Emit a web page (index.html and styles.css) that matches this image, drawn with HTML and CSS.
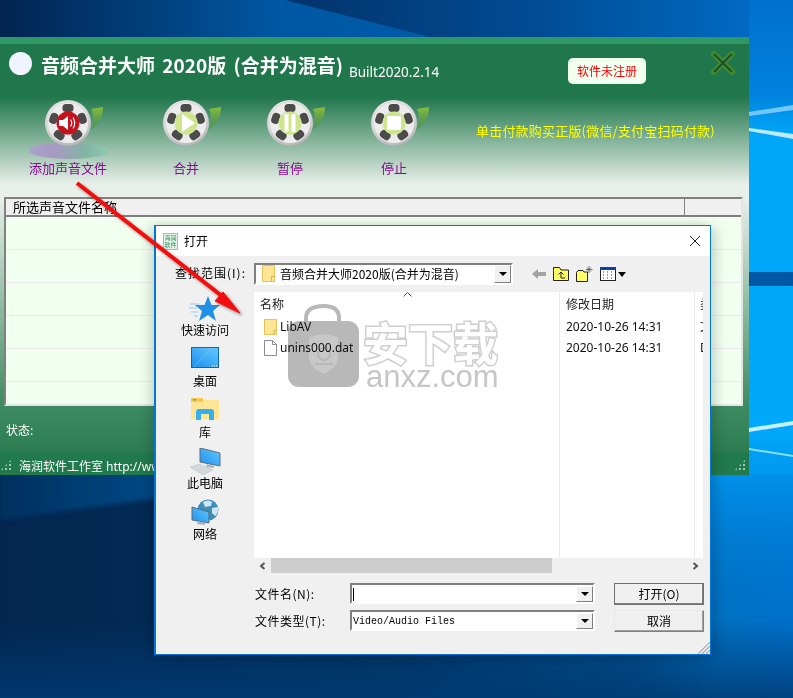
FILE: index.html
```html
<!DOCTYPE html>
<html lang="zh-CN">
<head>
<meta charset="utf-8">
<title>音频合并大师 2020版</title>
<link rel="stylesheet" href="styles.css">
</head>
<body>
<svg width="0" height="0" class="defs">
  <defs>
    <radialGradient id="reelFace" cx="45%" cy="35%" r="70%">
      <stop offset="0" stop-color="#f4f4f4"/><stop offset=".7" stop-color="#d6d6d6"/><stop offset="1" stop-color="#a9a9a9"/>
    </radialGradient>
    <linearGradient id="leaf" x1="0" y1="0" x2="0" y2="1">
      <stop offset="0" stop-color="#8dbf3c"/><stop offset="1" stop-color="#3f8a46" stop-opacity=".5"/>
    </linearGradient>
    <linearGradient id="screen" x1="0" y1="1" x2="1" y2="0">
      <stop offset="0" stop-color="#1a90ee"/><stop offset="1" stop-color="#66c8ff"/>
    </linearGradient>
    <symbol id="reel" viewBox="0 0 60 46">
      <path d="M45 30C49 25 49 14 46 9L58 7C58 17 53 26 45 30Z" fill="url(#leaf)"/>
      <circle cx="23" cy="23" r="23" fill="url(#reelFace)"/>
      <circle cx="23" cy="23" r="20" fill="#ececec"/>
      <g fill="#4b4b4b">
        <rect x="17.500" y="4" width="11" height="8" rx="3.500"/>
        <rect x="17.500" y="4" width="11" height="8" rx="3.500" transform="rotate(72 23 23)"/>
        <rect x="17.500" y="4" width="11" height="8" rx="3.500" transform="rotate(144 23 23)"/>
        <rect x="17.500" y="4" width="11" height="8" rx="3.500" transform="rotate(216 23 23)"/>
        <rect x="17.500" y="4" width="11" height="8" rx="3.500" transform="rotate(288 23 23)"/>
      </g>
    </symbol>
  </defs>
</svg>

<svg class="wallpaper" viewBox="0 0 793 698" width="793" height="698">
  <defs>
    <linearGradient id="wpTop" x1="0" y1="0" x2="1" y2="0">
      <stop offset="0" stop-color="#022450"/><stop offset=".36" stop-color="#0058a4"/><stop offset="1" stop-color="#0060b0"/>
    </linearGradient>
    <linearGradient id="wpTopRight" gradientUnits="userSpaceOnUse" x1="285" y1="0" x2="793" y2="0">
      <stop offset="0" stop-color="#03336c"/><stop offset=".5" stop-color="#004c94"/><stop offset="1" stop-color="#0070cc"/>
    </linearGradient>
    <linearGradient id="wpBase" x1="0" y1="0" x2="1" y2="0">
      <stop offset="0" stop-color="#02264f"/><stop offset=".5" stop-color="#02325f"/><stop offset=".8" stop-color="#00508f"/><stop offset=".9" stop-color="#0070c0"/><stop offset="1" stop-color="#0070cc"/>
    </linearGradient>
    <linearGradient id="wpFade" x1="0" y1="0" x2="0" y2="1">
      <stop offset="0" stop-color="#003a72" stop-opacity="0"/><stop offset="1" stop-color="#003a72" stop-opacity=".85"/>
    </linearGradient>
    <linearGradient id="wpRight" x1="0" y1="0" x2="0" y2="1">
      <stop offset="0" stop-color="#0070cc"/><stop offset=".2" stop-color="#0082de"/><stop offset=".28" stop-color="#00a6f8"/><stop offset=".9" stop-color="#00a8fb"/><stop offset="1" stop-color="#0098ee"/>
    </linearGradient>
    <linearGradient id="wpLower" x1="0" y1="0" x2="0" y2="1">
      <stop offset="0" stop-color="#0090ea"/><stop offset="1" stop-color="#0070c4" stop-opacity="0"/>
    </linearGradient>
    <linearGradient id="wpLeft" x1="0" y1="0" x2="1" y2="0">
      <stop offset="0" stop-color="#01305f"/><stop offset="1" stop-color="#024a88"/>
    </linearGradient>
    <filter id="wpSoft"><feGaussianBlur stdDeviation="2"/></filter>
  </defs>
  <rect width="793" height="698" fill="url(#wpBase)"/>
  <rect x="711" y="475" width="82" height="165" fill="url(#wpLower)"/>
  <rect y="620" width="793" height="78" fill="url(#wpFade)"/>
  <rect width="793" height="40" fill="url(#wpTop)"/>
  <polygon points="285,0 793,0 793,55 500,55" fill="url(#wpTopRight)"/>
  <polygon points="0,520 165,497 165,465 0,465" fill="url(#wpLeft)" filter="url(#wpSoft)"/>
  <rect x="749" y="0" width="44" height="475" fill="url(#wpRight)"/>
  <rect x="749" y="272" width="44" height="14" fill="#0058a5"/>
  <polygon points="749,428 793,421 793,425 749,432" fill="#c4f0ff"/>
  <polygon points="749,448 793,455 793,457 749,450" fill="#86e0ff"/>
  <polygon points="749,128 793,134 793,139 749,131" fill="#bfeaff"/>
  <polygon points="749,112 793,105 793,110 749,116" fill="#70c8ff"/>
</svg>

<main class="app">
  <div class="app-band"></div>
  <header class="app-title">
    <span class="app-dot"></span>
    <h1 class="app-name">音频合并大师 2020版 (合并为混音)</h1>
    <span class="app-build">Built2020.2.14</span>
    <span class="register">软件未注册</span>
    <svg class="app-close" width="26" height="26" viewBox="0 0 26 26">
      <path d="M4 4L22 22M22 4L4 22" stroke="#428c2c" stroke-width="6" stroke-linecap="round"/>
      <path d="M4 4L22 22M22 4L4 22" stroke="#1f4f2c" stroke-width="2"/>
    </svg>
  </header>
  <nav class="toolbar">
    <div class="tool tool-first">
      <div class="tool-icon">
        <span class="disc"></span>
        <svg class="reel" width="60" height="46"><use href="#reel"/></svg>
        <svg class="badge" width="24" height="24" viewBox="0 0 24 24">
          <circle cx="12" cy="12" r="11.500" fill="#c4121c"/>
          <path d="M3 9H7L12 5V19L7 15H3Z" fill="#fff"/>
          <path d="M14.500 8.500Q17 12 14.500 15.500M17 6.500Q20.500 12 17 17.500" fill="none" stroke="#fff" stroke-width="1.200"/>
        </svg>
      </div>
      <span class="tool-label">添加声音文件</span>
    </div>
    <div class="tool tool-second">
      <div class="tool-icon">
        <svg class="reel" width="60" height="46"><use href="#reel"/></svg>
        <svg class="badge" width="24" height="24" viewBox="0 0 24 24">
          <circle cx="12" cy="12" r="11.500" fill="#cfe58d"/>
          <path d="M8 3L21 12L8 21Z" fill="#fff"/>
        </svg>
      </div>
      <span class="tool-label">合并</span>
    </div>
    <div class="tool">
      <div class="tool-icon">
        <svg class="reel" width="60" height="46"><use href="#reel"/></svg>
        <svg class="badge" width="24" height="24" viewBox="0 0 24 24">
          <circle cx="12" cy="12" r="11.500" fill="#cfe58d"/>
          <path d="M6.500 3H10.500V21H6.500ZM13.500 3H17.500V21H13.500Z" fill="#fff"/>
        </svg>
      </div>
      <span class="tool-label">暂停</span>
    </div>
    <div class="tool">
      <div class="tool-icon">
        <svg class="reel" width="60" height="46"><use href="#reel"/></svg>
        <svg class="badge" width="24" height="24" viewBox="0 0 24 24">
          <circle cx="12" cy="12" r="11.500" fill="#cfe58d"/>
          <rect x="5" y="5" width="14" height="14" rx="1" fill="#fff"/>
        </svg>
      </div>
      <span class="tool-label">停止</span>
    </div>
    <span class="buy">单击付款购买正版(微信/支付宝扫码付款)</span>
  </nav>
  <section class="table">
    <div class="table-head">
      <span class="th th-name">所选声音文件名称</span>
      <span class="th th-rest"></span>
    </div>
    <div class="table-body">
      <div class="row"></div><div class="row"></div><div class="row"></div>
      <div class="row"></div><div class="row"></div><div class="row row-last"></div>
    </div>
  </section>
  <div class="status">状态:</div>
  <footer class="statusbar">
    <span class="grip grip-left"></span>
    <span class="statusbar-text">海润软件工作室 http://www</span>
    <span class="grip grip-right"></span>
  </footer>
</main>

<section class="dialog">
  <div class="dlg-title">
    <span class="dlg-logo">海润软件</span>
    <span class="dlg-caption">打开</span>
    <svg class="dlg-close" width="12" height="12" viewBox="0 0 12 12"><path d="M1 1L11 11M11 1L1 11" stroke="#222" stroke-width="1"/></svg>
  </div>
  <div class="dlg-lookin">
    <span class="dlg-lookin-label">查找范围(I):</span>
    <div class="combo combo-path">
      <svg class="folder-sm" width="13" height="17" viewBox="0 0 13 17"><path d="M.5.5H12.500V16.500H.5Z" fill="#ffe594" stroke="#e3c25c"/><path d="M9.500 16.500V11.500H12.500" fill="none" stroke="#d9b64f"/></svg>
      <span class="combo-text">音频合并大师2020版(合并为混音)</span>
      <span class="combo-btn"><i class="caret"></i></span>
    </div>
    <div class="lookin-tools">
      <svg width="14" height="10" viewBox="0 0 14 10"><path d="M0 5L6 0V3H14V7H6V10Z" fill="#a3a3a3"/></svg>
      <svg width="16" height="14" viewBox="0 0 16 14"><path d="M.5 3.500V.5H6.500L8 3H15.500V13.500H.5Z" fill="#ffff66" stroke="#222"/><path d="M8 11V6M5.500 7.500L8 5L10.500 7.500M8 11H12" fill="none" stroke="#222"/></svg>
      <svg width="17" height="16" viewBox="0 0 17 16"><path d="M.5 6.500L2 4.500H7L8 6H11.500V15.500H.5Z" fill="#ffff66" stroke="#222"/><path d="M13 0V7M10 3.500H16.500M11 1.500L15 5.500M15 1.500L11 5.500" stroke="#555" stroke-width=".8"/></svg>
      <svg width="16" height="14" viewBox="0 0 16 14"><rect x=".5" y=".5" width="15" height="13" fill="#fff" stroke="#222"/><rect x="0" y="0" width="16" height="3" fill="#0a3ea8"/><path d="M3 5H5M7 5H9M11 5H13M3 8H5M7 8H9M11 8H13M3 11H5M7 11H9M11 11H13" stroke="#1a2bb0" stroke-dasharray="1 1"/></svg>
      <i class="caret caret-big"></i>
    </div>
  </div>
  <div class="dlg-main">
    <aside class="places">
      <div class="place">
        <svg width="32" height="27" viewBox="0 0 32 27"><path d="M19 1L22.500 10H31L24 16L27 26L19 20L10 26L13 16L6 10H15.500Z" fill="#1f8fe8"/><path d="M1 9H10M0 13H8M2 17H9M5 21H9" stroke="#8fc8f2" stroke-width="1"/></svg>
        <span class="place-label">快速访问</span>
      </div>
      <div class="place">
        <svg width="28" height="27" viewBox="0 0 28 27"><rect x=".5" y="1.500" width="27" height="20" fill="url(#screen)" stroke="#0a68b4"/><path d="M3 21L20 2" stroke="#7fd2ff" stroke-width="1" opacity=".6"/><path d="M21 20H26" stroke="#fff" stroke-dasharray="1 1"/></svg>
        <span class="place-label">桌面</span>
      </div>
      <div class="place">
        <svg width="28" height="27" viewBox="0 0 28 27"><path d="M0 3Q0 1 2 1H11L13 3H27Q28 3 28 4V22H0Z" fill="#ffe694"/><path d="M0 1H12V5H0Z" fill="#fcc84c"/><rect x="2" y="2" width="3" height="1.500" fill="#3aa8e6"/><path d="M5 23V15Q5 12 8 12H20Q23 12 23 15V23H18V17H10V23Z" fill="#35b0ec"/></svg>
        <span class="place-label">库</span>
      </div>
      <div class="place">
        <svg width="32" height="27" viewBox="0 0 32 27"><path d="M11 0L31 5V18L11 14Z" fill="url(#screen)" stroke="#5d6e7c"/><path d="M18 16L25 18V20L17 19Z" fill="#a9b4bc"/><path d="M1 19L10 16L24 22L14 27Z" fill="#d3d8db" stroke="#b9bfc3" stroke-width=".5"/></svg>
        <span class="place-label">此电脑</span>
      </div>
      <div class="place">
        <svg width="28" height="27" viewBox="0 0 28 27"><circle cx="17" cy="11" r="10.500" fill="#3f8fbe"/><path d="M12 3Q17 0 21 3L20 7L14 8ZM21 9L27 8Q28 14 24 17L21 14Z" fill="#cfe6ef"/><path d="M1 8L18 13V24L1 21Z" fill="url(#screen)" stroke="#5b6a76"/><path d="M7 22L14 24V26L6 25Z" fill="#a8b2ba"/></svg>
        <span class="place-label">网络</span>
      </div>
    </aside>
    <div class="files">
      <div class="files-head">
        <span class="col col-name">名称</span>
        <span class="col col-date">修改日期</span>
        <span class="col col-type">类</span>
        <svg class="sort-caret" width="9" height="5" viewBox="0 0 9 5"><path d="M.5 4.500L4.500 .5L8.500 4.500" fill="none" stroke="#555"/></svg>
      </div>
      <div class="file">
        <span class="col col-name"><svg width="13" height="16" viewBox="0 0 13 16"><path d="M.5.5H12.500V15.500H.5Z" fill="#ffe594" stroke="#e3c25c"/><path d="M10 15V11H12.500" fill="none" stroke="#d9b64f"/></svg>LibAV</span>
        <span class="col col-date">2020-10-26 14:31</span>
        <span class="col col-type">文</span>
      </div>
      <div class="file">
        <span class="col col-name"><svg width="13" height="16" viewBox="0 0 13 16"><path d="M.5.5H8.500L12.500 4.500V15.500H.5Z" fill="#fff" stroke="#8c8c8c"/><path d="M8.500.5V4.500H12.500" fill="none" stroke="#8c8c8c"/></svg>unins000.dat</span>
        <span class="col col-date">2020-10-26 14:31</span>
        <span class="col col-type">D</span>
      </div>
    </div>
  </div>
  <div class="hscroll">
    <svg class="hs-arrow" width="7" height="8" viewBox="0 0 7 8"><path d="M5.500 1L2 4L5.500 7" fill="none" stroke="#555" stroke-width="2"/></svg>
    <span class="hs-track"><span class="hs-thumb"></span></span>
    <svg class="hs-arrow" width="7" height="8" viewBox="0 0 7 8"><path d="M1.500 1L5 4L1.500 7" fill="none" stroke="#555" stroke-width="2"/></svg>
  </div>
  <div class="dlg-form">
    <div class="form-fields">
      <div class="form-row">
        <span class="form-label">文件名(N):</span>
        <div class="combo combo-field"><span class="input-text"><i class="cursor"></i></span><span class="combo-btn"><i class="caret"></i></span></div>
      </div>
      <div class="form-row">
        <span class="form-label">文件类型(T):</span>
        <div class="combo combo-field"><span class="input-text">Video/Audio Files</span><span class="combo-btn"><i class="caret"></i></span></div>
      </div>
    </div>
    <div class="form-btns">
      <span class="btn btn-default">打开(O)</span>
      <span class="btn">取消</span>
    </div>
  </div>
  <svg class="dlg-grip" width="12" height="12" viewBox="0 0 12 12"><path d="M0 12L12 0M4 12L12 4M8 12L12 8" stroke="#a8a8a8" stroke-width="1.200"/></svg>
</section>

<div class="watermark">
  <svg class="wm-bag" width="72" height="84" viewBox="0 0 72 84">
    <path d="M18 20V14Q18 2 36 2Q51 2 51 14V20" fill="none" stroke="#b8b8b8" stroke-width="4"/>
    <rect x="0" y="17" width="71" height="66" rx="11" fill="#b8b8b8"/>
    <path d="M21 33Q36 28 50 33V55Q48 65 36 70Q24 65 21 55Z" fill="#c8c8c8"/>
    <circle cx="36" cy="50" r="6" fill="none" stroke="#b8b8b8" stroke-width="2"/>
    <path d="M27 60H45" stroke="#b8b8b8" stroke-width="2"/>
  </svg>
  <div class="wm-text">
    <span class="wm-cn">安下载</span>
    <span class="wm-en">anxz.com</span>
  </div>
</div>

<svg class="pointer" width="793" height="698" viewBox="0 0 793 698">
  <defs><filter id="arrowShadow" x="-10%" y="-10%" width="120%" height="120%"><feDropShadow dx="2" dy="2" stdDeviation="1.500" flood-color="#000" flood-opacity=".45"/></filter></defs>
  <g filter="url(#arrowShadow)">
    <path d="M77 183L227 300" stroke="#f40c0c" stroke-width="4"/>
    <path d="M240 313L215 301L223 292Z" fill="#f40c0c" stroke="#f40c0c" stroke-width="1"/>
  </g>
</svg>
</body>
</html>
```

FILE: styles.css
```css
* { box-sizing: border-box; }
html, body { margin: 0; padding: 0; }
body {
  position: relative;
  width: 793px;
  height: 698px;
  overflow: hidden;
  background: #02264f;
  font-family: "Noto Sans CJK SC", "Noto Sans", sans-serif;
  font-size: 12px;
  color: #000;
}
.defs { position: absolute; }
.wallpaper { position: absolute; left: 0; top: 0; display: block; }

/* main app window */
.app {
  position: absolute;
  left: 0;
  top: 37px;
  width: 749px;
  height: 438px;
  display: flex;
  flex-direction: column;
  background: linear-gradient(#21774c 0, #21774c 60px, #e9f0ea 148px, #e9f0ea 160px, #3d8b61 368px, #2c7c52 416px);
}
.app-band { height: 7px; flex: none; background: #2f9966; }
.app-title {
  height: 38px;
  flex: none;
  display: flex;
  align-items: center;
  padding-left: 9px;
  color: #fff;
}
.app-dot { width: 23px; height: 23px; border-radius: 50%; background: #f0f4ff; flex: none; }
.app-name { margin: 4px 0 0 9px; font-size: 19px; line-height: 24px; font-weight: 700; white-space: nowrap; word-spacing: 3px; width: 308px; flex: none; }
.app-build { font-family: "Noto Sans", sans-serif; font-size: 13.500px; line-height: 18px; margin-top: 18px; width: 219px; flex: none; }
.register {
  width: 78px;
  height: 26px;
  line-height: 26px;
  text-align: center;
  border-radius: 5px;
  background: #f0fff0;
  color: #f00;
  font-size: 12px;
  flex: none;
  margin-top: 16px;
}
.app-close { margin: 0 0 0 64px; flex: none; }

.toolbar { height: 115px; flex: none; display: flex; padding-top: 18px; }
.tool { width: 104px; flex: none; display: flex; flex-direction: column; align-items: center; }
.tool-first { margin-left: 16px; }
.tool-second { margin-left: 14px; }
.tool-icon { position: relative; width: 46px; height: 46px; margin-bottom: 14px; }
.reel { position: absolute; left: 0; top: 0; display: block; }
.badge { position: absolute; left: 11px; top: 11px; display: block; }
.disc {
  position: absolute;
  left: -16px;
  top: 42px;
  width: 80px;
  height: 17px;
  border-radius: 50%;
  background: linear-gradient(90deg, #a9a0cc, #a79ac0 35%, #80b5a3 70%, #90c8b4);
}
.tool-label { font-size: 13px; line-height: 16px; color: #8a0a93; white-space: nowrap; }
.buy { margin: 23px 0 0 30px; font-size: 13px; line-height: 16px; color: #ff0; white-space: nowrap; letter-spacing: .2px; }

.table {
  height: 209px;
  flex: none;
  margin: 0 6px 0 4px;
  display: flex;
  flex-direction: column;
  border: 2px solid #808080;
  border-right-color: #e4e4e4;
  border-bottom-color: #e4e4e4;
}
.table-head { height: 18px; flex: none; display: flex; background: #f0f0f0; border-bottom: 2px solid #808080; }
.th { display: block; font-size: 13px; line-height: 16px; padding-left: 7px; white-space: nowrap; }
.th-name { width: 679px; border-right: 1px solid #808080; }
.th-rest { flex: 1; }
.table-body { flex: 1; background: #f0fff0; overflow: hidden; }
.row { height: 33px; border-bottom: 1px solid #f0e8ee; }
.row-last { border-bottom: 0; }
.status { height: 47px; flex: none; padding: 16px 0 0 6px; line-height: 16px; color: #fff; font-size: 12px; }
.statusbar { height: 22px; flex: none; display: flex; align-items: center; background: #217a4d; position: relative; padding-left: 19px; }
.statusbar-text { color: #fff; font-family: "Noto Sans", "Noto Sans CJK SC", sans-serif; font-size: 12px; line-height: 16px; white-space: nowrap; margin-top: 6px; }
.grip {
  position: absolute;
  bottom: 4px;
  width: 12px;
  height: 12px;
  background-image: radial-gradient(circle, #a4c4b0 1px, transparent 1.200px);
  background-size: 4px 4px;
  clip-path: polygon(100% 0, 100% 100%, 0 100%);
}
.grip-left { left: 0; }
.grip-right { right: 3px; }

/* open-file dialog */
.dialog {
  position: absolute;
  left: 154px;
  top: 225px;
  width: 557px;
  height: 430px;
  display: flex;
  flex-direction: column;
  background: #f0f0f0;
  border: 1px solid #0078d7;
  border-left-width: 2px;
  box-shadow: -6px 0 10px rgba(0, 0, 0, .12), 6px 2px 10px rgba(0, 0, 0, .14);
}
.dlg-title { height: 30px; flex: none; display: flex; align-items: center; background: #fff; padding-left: 7px; }
.dlg-logo {
  width: 15px;
  height: 17px;
  flex: none;
  font-size: 6px;
  line-height: 7.500px;
  text-align: center;
  color: #2f8f58;
  background: #e6f2ea;
  border: 1px solid #9cc6ab;
  overflow: hidden;
}
.dlg-caption { margin-left: 6px; font-size: 12px; line-height: 16px; }
.dlg-close { margin-left: auto; margin-right: 9px; }
.dlg-lookin { height: 36px; flex: none; display: flex; align-items: center; padding-left: 19px; }
.dlg-lookin-label { width: 79px; flex: none; font-size: 12px; line-height: 16px; white-space: nowrap; margin-top: -2px; letter-spacing: 1px; }
.combo {
  display: flex;
  align-items: center;
  background: #fff;
  border: 2px solid;
  border-color: #808080 #fff #fff #808080;
  outline: 0;
}
.combo-path { width: 259px; height: 22px; flex: none; padding-left: 6px; margin-top: -1px; }
.folder-sm { flex: none; display: block; }
.combo-text { margin-left: 5px; font-size: 12px; line-height: 16px; white-space: nowrap; flex: 1; }
.combo-btn {
  margin-left: auto;
  width: 17px;
  height: 18px;
  flex: none;
  display: flex;
  align-items: center;
  justify-content: center;
  background: #f0f0f0;
  border: 1px solid;
  border-color: #fff #808080 #808080 #fff;
}
.caret { display: block; width: 0; height: 0; border-left: 4px solid transparent; border-right: 4px solid transparent; border-top: 4px solid #000; }
.caret-big { border-left-width: 4.500px; border-right-width: 4.500px; border-top-width: 5px; margin-left: -5px; }
.lookin-tools { display: flex; align-items: center; gap: 7px; margin-left: 19px; }
.lookin-tools svg { display: block; flex: none; }
.dlg-main { height: 266px; flex: none; display: flex; }
.places { width: 98px; flex: none; padding-top: 3px; display: flex; flex-direction: column; }
.place { height: 51px; flex: none; display: flex; flex-direction: column; align-items: center; }
.place svg { display: block; height: 27px; flex: none; }
.place-label { font-size: 12px; line-height: 16px; white-space: nowrap; }
.files {
  width: 449px;
  flex: none;
  position: relative;
  background: #fff linear-gradient(#e3ecf5, #e3ecf5) 305px 0 / 1px 100% no-repeat;
  overflow: hidden;
}
.files::after { content: ""; position: absolute; left: 440px; top: 0; bottom: 0; width: 1px; background: #e3ecf5; }
.files-head { height: 24px; display: flex; align-items: center; position: relative; color: #222; }
.sort-caret { position: absolute; left: 149px; top: 0; display: block; }
.col { display: flex; align-items: center; white-space: nowrap; font-size: 12px; line-height: 16px; }
.col-name { width: 312px; flex: none; padding-left: 6px; }
.col-date { width: 134px; flex: none; }
.col-type { flex: none; }
.file { height: 21px; display: flex; align-items: center; color: #111; font-family: "Noto Sans", "Noto Sans CJK SC", sans-serif; }
.file .col-name { padding-left: 10px; gap: 3px; }
.file .col-name svg { flex: none; display: block; }
.hscroll { height: 15px; flex: none; margin-left: 98px; width: 449px; display: flex; align-items: center; padding: 0 4px 0 5px; }
.hs-arrow { display: block; flex: none; }
.hs-track { flex: 1; height: 15px; display: block; margin-left: 5px; margin-right: 4px; }
.hs-thumb { display: block; width: 281px; height: 15px; background: #cdcdcd; }
.dlg-form { flex: 1; display: flex; padding: 10px 0 0 99px; }
.form-fields { width: 359px; flex: none; display: flex; flex-direction: column; gap: 6px; }
.form-row { height: 21px; display: flex; align-items: center; }
.form-label { width: 95px; flex: none; font-size: 12px; line-height: 16px; white-space: nowrap; letter-spacing: .5px; }
.combo-field { width: 245px; height: 21px; flex: none; padding-left: 1px; }
.input-text { font-family: "Liberation Mono", monospace; font-size: 10px; line-height: 14px; white-space: nowrap; margin-top: 2px; }
.cursor { display: block; width: 1px; height: 13px; background: #000; }
.combo-field .combo-btn { height: 16px; }
.form-btns { display: flex; flex-direction: column; gap: 5px; }
.btn {
  width: 90px;
  height: 22px;
  display: flex;
  align-items: center;
  justify-content: center;
  font-size: 12px;
  line-height: 16px;
  background: #f0f0f0;
  border: 1px solid;
  border-color: #e8e8e8 #808080 #808080 #e8e8e8;
  box-shadow: inset -1px -1px 0 #a0a0a0;
}
.btn-default { border: 1px solid #707070; box-shadow: inset -1px -1px 0 #808080; }
.dlg-grip { position: absolute; right: 0; bottom: 0; display: block; }

/* watermark over the dialog */
.watermark {
  position: absolute;
  left: 288px;
  top: 304px;
  display: flex;
  gap: 3px;
  align-items: flex-start;
  mix-blend-mode: multiply;
}
.wm-bag { display: block; flex: none; }
.wm-text { display: flex; flex-direction: column; margin-top: 16px; }
.wm-cn {
  font-size: 45px;
  line-height: 44px;
  font-weight: 700;
  color: #fff;
  -webkit-text-stroke: 3px #cfcfcf;
  paint-order: stroke fill;
  white-space: nowrap;
}
.wm-en { font-family: "Liberation Sans", sans-serif; font-size: 31px; line-height: 26px; padding-left: 3px; color: #c6c6c6; white-space: nowrap; }

.pointer { position: absolute; left: 0; top: 0; display: block; pointer-events: none; }
```
